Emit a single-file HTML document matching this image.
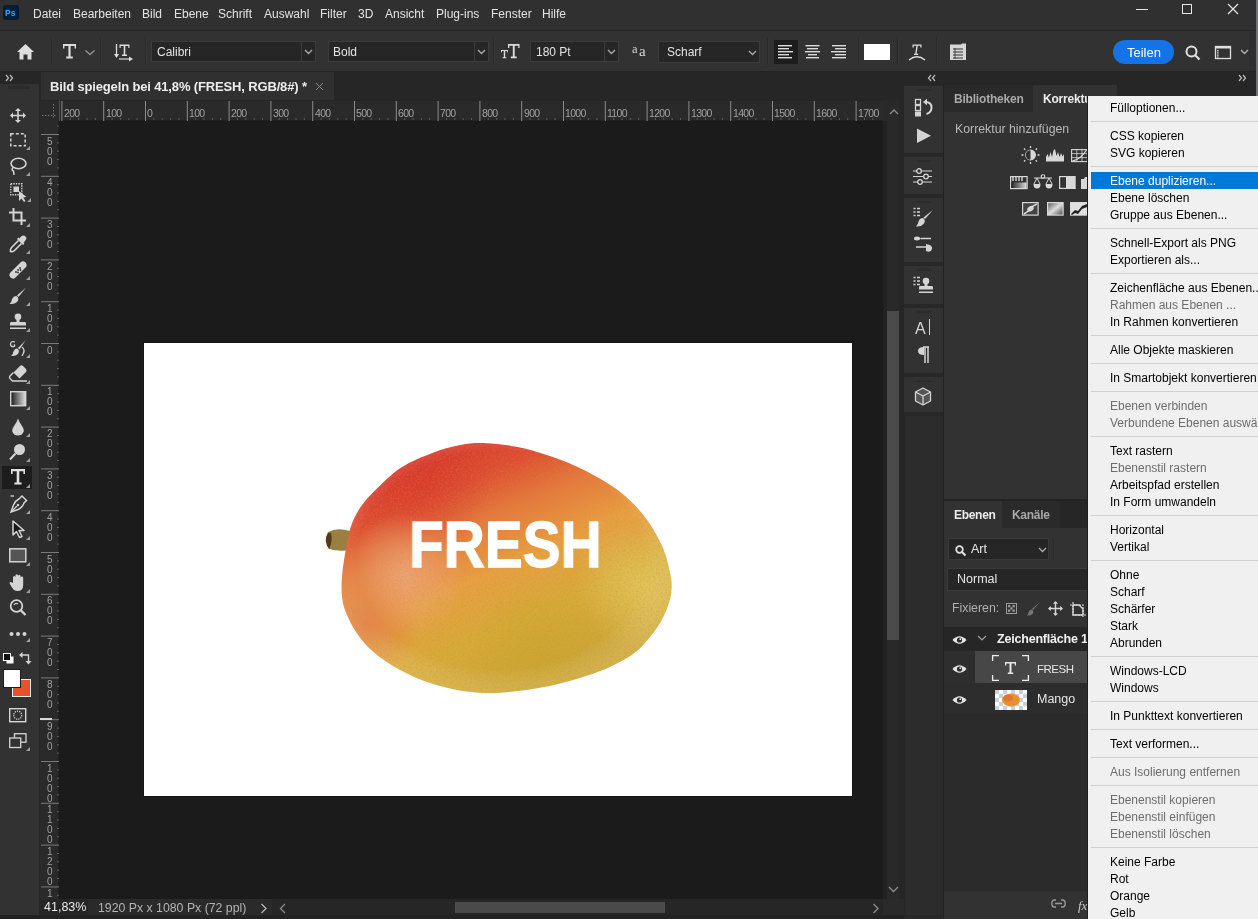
<!DOCTYPE html>
<html><head><meta charset="utf-8"><style>
*{margin:0;padding:0;box-sizing:border-box}
html,body{width:1258px;height:919px;overflow:hidden;background:#323232;font-family:"Liberation Sans",sans-serif;font-size:12px;color:#d6d6d6}
.a{position:absolute}
.t{position:absolute;white-space:nowrap;line-height:1;will-change:transform}
svg{position:absolute;overflow:visible}

</style></head><body>
<div class="a" style="left:0px;top:0px;width:1258px;height:30px;background:#303030;"></div>
<div class="a" style="left:0px;top:30px;width:1258px;height:1px;background:#262626;"></div>
<div class="a" style="left:3px;top:5px;width:16px;height:15px;background:#001e36;border-radius:3px"></div>
<div class="t" style="left:5.3px;top:8.60px;font-size:8.5px;color:#31a8ff;font-weight:bold;">Ps</div>
<div class="t" style="left:33px;top:7.84px;font-size:12px;color:#e2e2e2;font-weight:normal;">Datei</div>
<div class="t" style="left:73px;top:7.84px;font-size:12px;color:#e2e2e2;font-weight:normal;">Bearbeiten</div>
<div class="t" style="left:142px;top:7.84px;font-size:12px;color:#e2e2e2;font-weight:normal;">Bild</div>
<div class="t" style="left:174px;top:7.84px;font-size:12px;color:#e2e2e2;font-weight:normal;">Ebene</div>
<div class="t" style="left:218px;top:7.84px;font-size:12px;color:#e2e2e2;font-weight:normal;">Schrift</div>
<div class="t" style="left:264px;top:7.84px;font-size:12px;color:#e2e2e2;font-weight:normal;">Auswahl</div>
<div class="t" style="left:320px;top:7.84px;font-size:12px;color:#e2e2e2;font-weight:normal;">Filter</div>
<div class="t" style="left:358px;top:7.84px;font-size:12px;color:#e2e2e2;font-weight:normal;">3D</div>
<div class="t" style="left:385px;top:7.84px;font-size:12px;color:#e2e2e2;font-weight:normal;">Ansicht</div>
<div class="t" style="left:436px;top:7.84px;font-size:12px;color:#e2e2e2;font-weight:normal;">Plug-ins</div>
<div class="t" style="left:491px;top:7.84px;font-size:12px;color:#e2e2e2;font-weight:normal;">Fenster</div>
<div class="t" style="left:542px;top:7.84px;font-size:12px;color:#e2e2e2;font-weight:normal;">Hilfe</div>
<div class="a" style="left:1136px;top:9px;width:12px;height:1px;background:#e6e6e6;"></div>
<div class="a" style="left:1182px;top:4px;width:10px;height:10px;background:transparent;border:1px solid #e6e6e6"></div>
<svg style="left:1227px;top:3px" width="12" height="12" viewBox="0 0 12 12"><path d="M1,1 L11,11 M11,1 L1,11" stroke="#e6e6e6" stroke-width="1.2"/></svg>
<div class="a" style="left:0px;top:31px;width:1258px;height:40px;background:#323232;"></div>
<div class="a" style="left:0px;top:71px;width:1258px;height:1px;background:#232323;"></div>
<div class="a" style="left:51px;top:38px;width:1px;height:27px;background:#2a2a2a;"></div>
<div class="a" style="left:52px;top:38px;width:1px;height:27px;background:#363636;"></div>
<div class="a" style="left:100px;top:38px;width:1px;height:27px;background:#2a2a2a;"></div>
<div class="a" style="left:101px;top:38px;width:1px;height:27px;background:#363636;"></div>
<div class="a" style="left:145px;top:38px;width:1px;height:27px;background:#2a2a2a;"></div>
<div class="a" style="left:146px;top:38px;width:1px;height:27px;background:#363636;"></div>
<div class="a" style="left:493px;top:38px;width:1px;height:27px;background:#2a2a2a;"></div>
<div class="a" style="left:494px;top:38px;width:1px;height:27px;background:#363636;"></div>
<div class="a" style="left:767px;top:38px;width:1px;height:27px;background:#2a2a2a;"></div>
<div class="a" style="left:768px;top:38px;width:1px;height:27px;background:#363636;"></div>
<div class="a" style="left:858px;top:38px;width:1px;height:27px;background:#2a2a2a;"></div>
<div class="a" style="left:859px;top:38px;width:1px;height:27px;background:#363636;"></div>
<div class="a" style="left:897px;top:38px;width:1px;height:27px;background:#2a2a2a;"></div>
<div class="a" style="left:898px;top:38px;width:1px;height:27px;background:#363636;"></div>
<div class="a" style="left:936px;top:38px;width:1px;height:27px;background:#2a2a2a;"></div>
<div class="a" style="left:937px;top:38px;width:1px;height:27px;background:#363636;"></div>
<svg style="left:17px;top:44px" width="17" height="16" viewBox="0 0 17 16"><path d="M8.5,0 L17,8 L14.5,8 L14.5,15.5 L10.5,15.5 L10.5,10.5 L6.5,10.5 L6.5,15.5 L2.5,15.5 L2.5,8 L0,8 Z" fill="#dedede"/></svg>
<svg style="left:63px;top:44px" width="13" height="15" viewBox="0 0 13 15"><path d="M0,0 H13 V4.5 H11.6 V2 H7.6 V12.6 H9.8 V14.5 H3.2 V12.6 H5.4 V2 H1.4 V4.5 H0 Z" fill="#dcdcdc"/></svg>
<svg style="left:84px;top:49px" width="12" height="7" viewBox="0 0 12 7"><path d="M1.5,1.5 L6,5.5 L10.5,1.5" fill="none" stroke="#8f8f8f" stroke-width="1.5"/></svg>
<svg style="left:114px;top:43px" width="20" height="19" viewBox="0 0 20 19"><path d="M2.5,1 V13" stroke="#dcdcdc" stroke-width="1.3"/><path d="M0,11 L2.5,15 L5,11 Z" fill="#dcdcdc"/><path d="M5.5,1.5 H15.5 V5 H14.3 V3 H11.3 V11.4 H13 V13 H8 V11.4 H9.7 V3 H6.7 V5 H5.5 Z" fill="#dcdcdc"/><path d="M5,16 H16" stroke="#dcdcdc" stroke-width="1.2"/><path d="M15,13.5 L19,16 L15,18.5 Z" fill="#dcdcdc"/></svg>
<div class="a" style="left:151px;top:41px;width:165px;height:21px;background:#262626;border:1px solid #3c3c3c"></div>
<div class="a" style="left:301px;top:42px;width:1px;height:19px;background:#3c3c3c;"></div>
<svg style="left:304px;top:49px" width="9" height="6" viewBox="0 0 9 6"><path d="M1,1 L4.5,4.5 L8,1" fill="none" stroke="#a8a8a8" stroke-width="1.4"/></svg>
<div class="t" style="left:157px;top:45.64px;font-size:12px;color:#e2e2e2;font-weight:normal;">Calibri</div>
<div class="a" style="left:328px;top:41px;width:161px;height:21px;background:#262626;border:1px solid #3c3c3c"></div>
<div class="a" style="left:474px;top:42px;width:1px;height:19px;background:#3c3c3c;"></div>
<svg style="left:477px;top:49px" width="9" height="6" viewBox="0 0 9 6"><path d="M1,1 L4.5,4.5 L8,1" fill="none" stroke="#a8a8a8" stroke-width="1.4"/></svg>
<div class="t" style="left:333px;top:45.64px;font-size:12px;color:#e2e2e2;font-weight:normal;">Bold</div>
<svg style="left:501px;top:44px" width="19" height="15" viewBox="0 0 19 15"><path d="M0,6 H7 V8.5 H6.2 V7 H4.2 V13.2 H5.4 V14.2 H1.6 V13.2 H2.8 V7 H0.8 V8.5 H0 Z" fill="#dcdcdc"/><path d="M7,0 H18.5 V4 H17.2 V1.8 H13.7 V12.5 H15.7 V14.3 H9.8 V12.5 H11.8 V1.8 H8.3 V4 H7 Z" fill="#dcdcdc"/></svg>
<div class="a" style="left:530px;top:41px;width:89px;height:21px;background:#262626;border:1px solid #3c3c3c"></div>
<div class="a" style="left:604px;top:42px;width:1px;height:19px;background:#3c3c3c;"></div>
<svg style="left:607px;top:49px" width="9" height="6" viewBox="0 0 9 6"><path d="M1,1 L4.5,4.5 L8,1" fill="none" stroke="#a8a8a8" stroke-width="1.4"/></svg>
<div class="t" style="left:536px;top:45.64px;font-size:12px;color:#e2e2e2;font-weight:normal;">180 Pt</div>
<div class="t" style="left:632px;top:42.92px;font-size:12.5px;color:#d8d8d8;font-weight:normal;font-family:'Liberation Serif',serif">a</div>
<div class="t" style="left:638.5px;top:44.30px;font-size:15px;color:#d8d8d8;font-weight:normal;font-family:'Liberation Serif',serif">a</div>
<div class="a" style="left:658px;top:41px;width:102px;height:22px;background:#262626;border:1px solid #3c3c3c"></div>
<svg style="left:748px;top:49.5px" width="9" height="6" viewBox="0 0 9 6"><path d="M1,1 L4.5,4.5 L8,1" fill="none" stroke="#a8a8a8" stroke-width="1.4"/></svg>
<div class="t" style="left:667px;top:46.14px;font-size:12px;color:#e2e2e2;font-weight:normal;">Scharf</div>
<div class="a" style="left:774px;top:40px;width:24px;height:24px;background:#1d1d1d;"></div>
<svg style="left:778px;top:45px" width="15" height="14" viewBox="0 0 15 14"><rect x="0" y="0" width="14" height="1.4" fill="#dcdcdc"/><rect x="0" y="3" width="11" height="1.4" fill="#dcdcdc"/><rect x="0" y="6" width="15" height="1.4" fill="#dcdcdc"/><rect x="0" y="9" width="11" height="1.4" fill="#dcdcdc"/><rect x="0" y="12" width="14" height="1.4" fill="#dcdcdc"/></svg>
<svg style="left:804.5px;top:45px" width="15" height="14" viewBox="0 0 15 14"><rect x="0.5" y="0" width="14" height="1.4" fill="#dcdcdc"/><rect x="2" y="3" width="11" height="1.4" fill="#dcdcdc"/><rect x="0" y="6" width="15" height="1.4" fill="#dcdcdc"/><rect x="3" y="9" width="9" height="1.4" fill="#dcdcdc"/><rect x="1" y="12" width="13" height="1.4" fill="#dcdcdc"/></svg>
<svg style="left:831px;top:45px" width="15" height="14" viewBox="0 0 15 14"><rect x="1" y="0" width="14" height="1.4" fill="#dcdcdc"/><rect x="4" y="3" width="11" height="1.4" fill="#dcdcdc"/><rect x="0" y="6" width="15" height="1.4" fill="#dcdcdc"/><rect x="4" y="9" width="11" height="1.4" fill="#dcdcdc"/><rect x="1" y="12" width="14" height="1.4" fill="#dcdcdc"/></svg>
<div class="a" style="left:864px;top:44px;width:26px;height:16px;background:#ffffff;"></div>
<svg style="left:908px;top:43px" width="18" height="18" viewBox="0 0 18 18"><path d="M4.5,1.5 H13.5 V4.5 H12.3 V2.8 H9.8 L8.6,10.8 H10.2 V12 H6 V10.8 H7.2 L8.4,2.8 H5.7 V4.5 H4.5 Z" fill="#dcdcdc"/><path d="M1,17 Q9,10.5 17,17" fill="none" stroke="#dcdcdc" stroke-width="1.4"/></svg>
<svg style="left:949px;top:43px" width="18" height="18" viewBox="0 0 18 18"><path d="M1,1.5 H12 L13,0.5 H17 V17 H1 Z" fill="#d6d6d6"/><path d="M4,6 H14 M4,9 H14 M4,12 H14 M4,15 H14" stroke="#323232" stroke-width="1.2"/><path d="M6,5 V16" stroke="#323232" stroke-width="0.8"/></svg>
<div class="a" style="left:1113px;top:40px;width:61px;height:24px;background:#1473e6;border-radius:12px"></div>
<div class="t" style="left:1126.5px;top:45.80px;font-size:13px;color:#ffffff;font-weight:normal;">Teilen</div>
<svg style="left:1185px;top:45px" width="16" height="16" viewBox="0 0 16 16"><circle cx="6.5" cy="6.5" r="5" fill="none" stroke="#e0e0e0" stroke-width="2"/><path d="M10,10 L14.5,14.5" stroke="#e0e0e0" stroke-width="2.2"/></svg>
<svg style="left:1214px;top:45px" width="18" height="15" viewBox="0 0 18 15"><rect x="1.5" y="1.5" width="15" height="12" fill="none" stroke="#e0e0e0" stroke-width="1.3"/><rect x="1.5" y="1.5" width="15" height="2" fill="#e0e0e0"/><path d="M3.8,5 V12.5" stroke="#e0e0e0" stroke-width="1.6" stroke-dasharray="1.3,0.9"/></svg>
<svg style="left:1240px;top:49px" width="10" height="6" viewBox="0 0 10 6"><path d="M1,1 L4.5,4.5 L8,1" fill="none" stroke="#b0b0b0" stroke-width="1.4"/></svg>
<div class="a" style="left:1253px;top:31px;width:1px;height:40px;background:#2a2a2a;"></div>
<div class="a" style="left:0px;top:72px;width:39px;height:847px;background:#323232;"></div>
<div class="a" style="left:0px;top:72px;width:39px;height:12px;background:#262626;"></div>
<div class="a" style="left:39px;top:72px;width:1px;height:847px;background:#262626;"></div>
<svg style="left:5px;top:74px" width="10" height="8" viewBox="0 0 10 8"><path d="M1,1 L3.5,4 L1,7 M5,1 L7.5,4 L5,7" fill="none" stroke="#bdbdbd" stroke-width="1.2"/></svg>
<div class="a" style="left:8px;top:86px;width:22px;height:3px;background:#2b2b2b;"></div>
<svg style="left:10px;top:108px" width="16" height="15" viewBox="0 0 16 15"><path d="M8,1 V14 M1,7.5 H15" stroke="#d4d4d4" stroke-width="1.6"/><path d="M8,0 L11,3 H5 Z M8,15 L11,12 H5 Z M0,7.5 L3,4.5 V10.5 Z M16,7.5 L13,4.5 V10.5 Z" fill="#d4d4d4"/></svg>
<svg style="left:10px;top:133px" width="17" height="14" viewBox="0 0 17 14"><rect x="0.8" y="0.8" width="14.4" height="12" fill="none" stroke="#d4d4d4" stroke-width="1.5" stroke-dasharray="3,2"/></svg>
<svg style="left:26px;top:146px" width="5" height="5" viewBox="0 0 5 5"><path d="M4,0 L4,4 L0,4 Z" fill="#a0a0a0"/></svg>
<svg style="left:9px;top:157px" width="18" height="19" viewBox="0 0 18 19"><ellipse cx="9.5" cy="6.5" rx="7.5" ry="5.2" fill="none" stroke="#d4d4d4" stroke-width="1.6"/><path d="M4,10.5 Q2,13 4.5,14 L5,18" fill="none" stroke="#d4d4d4" stroke-width="1.5"/></svg>
<svg style="left:26px;top:172px" width="5" height="5" viewBox="0 0 5 5"><path d="M4,0 L4,4 L0,4 Z" fill="#a0a0a0"/></svg>
<svg style="left:10px;top:183px" width="19" height="19" viewBox="0 0 19 19"><rect x="0.8" y="0.8" width="11" height="11" fill="none" stroke="#d4d4d4" stroke-width="1.4" stroke-dasharray="1.4,1.1"/><rect x="3.5" y="3.5" width="5.5" height="5.5" fill="#d4d4d4"/><path d="M9,8 L9,18 L11.5,15.5 L14,19 L15.5,18 L13.2,14.5 L16.5,14 Z" fill="#d4d4d4"/></svg>
<svg style="left:27px;top:198px" width="5" height="5" viewBox="0 0 5 5"><path d="M4,0 L4,4 L0,4 Z" fill="#a0a0a0"/></svg>
<svg style="left:9px;top:208px" width="18" height="18" viewBox="0 0 18 18"><path d="M4.5,0 V12.5 H17 M0,4.5 H12.5 V17" fill="none" stroke="#d4d4d4" stroke-width="2"/></svg>
<svg style="left:26px;top:223px" width="5" height="5" viewBox="0 0 5 5"><path d="M4,0 L4,4 L0,4 Z" fill="#a0a0a0"/></svg>
<svg style="left:9px;top:235px" width="18" height="18" viewBox="0 0 18 18"><path d="M12,1.5 Q14.5,-0.5 16.5,1.5 Q18.5,3.5 16,6 L14.5,7.5 L15.5,8.5 L14,10 L8,4 L9.5,2.5 L10.5,3.5 Z" fill="#d4d4d4"/><path d="M9.5,5.5 L2.5,12.5 Q1,14 1.5,16.5 Q4,17 5.5,15.5 L12.5,8.5" fill="none" stroke="#d4d4d4" stroke-width="1.6"/></svg>
<svg style="left:26px;top:250px" width="5" height="5" viewBox="0 0 5 5"><path d="M4,0 L4,4 L0,4 Z" fill="#a0a0a0"/></svg>
<svg style="left:9px;top:261px" width="18" height="18" viewBox="0 0 18 18"><path d="M12,1 Q14,-0.5 16.5,1.5 Q18.5,4 17,6 L6,17 Q4,18.5 1.5,16.5 Q-0.5,14 1,12 Z" fill="#d4d4d4"/><circle cx="7" cy="11" r="0.9" fill="#323232"/><circle cx="9" cy="9" r="0.9" fill="#323232"/><circle cx="11" cy="7" r="0.9" fill="#323232"/><circle cx="9" cy="11.5" r="0.9" fill="#323232"/><circle cx="11.5" cy="9" r="0.9" fill="#323232"/></svg>
<svg style="left:26px;top:276px" width="5" height="5" viewBox="0 0 5 5"><path d="M4,0 L4,4 L0,4 Z" fill="#a0a0a0"/></svg>
<svg style="left:9px;top:287px" width="18" height="18" viewBox="0 0 18 18"><path d="M17,0.5 L9.5,10 L8,8.5 Z" fill="#d4d4d4"/><path d="M7.5,9 Q4,9 3,12.5 Q2.5,15.5 0.5,17 Q5.5,17.5 8,15 Q10,12.5 9,10.5 Z" fill="#d4d4d4"/></svg>
<svg style="left:26px;top:302px" width="5" height="5" viewBox="0 0 5 5"><path d="M4,0 L4,4 L0,4 Z" fill="#a0a0a0"/></svg>
<svg style="left:9px;top:313px" width="18" height="18" viewBox="0 0 18 18"><circle cx="9" cy="3.8" r="3.3" fill="#d4d4d4"/><path d="M7.5,6 H10.5 V9 H16 Q17,9 17,10.5 V12.5 H1 V10.5 Q1,9 2,9 H7.5 Z" fill="#d4d4d4"/><rect x="1" y="14.5" width="16" height="1.5" fill="#d4d4d4"/></svg>
<svg style="left:26px;top:328px" width="5" height="5" viewBox="0 0 5 5"><path d="M4,0 L4,4 L0,4 Z" fill="#a0a0a0"/></svg>
<svg style="left:9px;top:339px" width="19" height="19" viewBox="0 0 19 19"><path d="M6,3 Q2,1.5 1.5,5 Q1.5,8 5,7.5 Q6.5,6.5 5,5.5" fill="none" stroke="#d4d4d4" stroke-width="1.3"/><path d="M16.5,1.5 L10.5,10.5 L9,9 Z" fill="#d4d4d4"/><path d="M8.5,9.5 Q5.5,9.5 4.5,12.5 Q4,15.5 2,17 Q6.5,17.5 9,15 Q10.5,13 9.7,11 Z" fill="#d4d4d4"/><path d="M13,8 Q17,11 13,17" fill="none" stroke="#d4d4d4" stroke-width="1.3"/></svg>
<svg style="left:26px;top:354px" width="5" height="5" viewBox="0 0 5 5"><path d="M4,0 L4,4 L0,4 Z" fill="#a0a0a0"/></svg>
<svg style="left:9px;top:365px" width="19" height="18" viewBox="0 0 19 18"><path d="M11,1 Q12.5,-0.3 14,1 L17,4 Q18.3,5.5 17,7 L10.5,13.5 L4.5,7.5 Z" fill="#d4d4d4"/><path d="M4.5,7.5 L1,11 Q0,12.3 1,13.5 L3.5,16 H18" fill="none" stroke="#d4d4d4" stroke-width="1.4"/></svg>
<svg style="left:26px;top:380px" width="5" height="5" viewBox="0 0 5 5"><path d="M4,0 L4,4 L0,4 Z" fill="#a0a0a0"/></svg>
<svg style="left:10px;top:391px" width="18" height="16" viewBox="0 0 18 16"><defs><linearGradient id="gg" x1="0" y1="0" x2="1" y2="0"><stop offset="0" stop-color="#1a1a1a"/><stop offset="1" stop-color="#e0e0e0"/></linearGradient></defs><rect x="0.7" y="0.7" width="15" height="14" fill="url(#gg)" stroke="#d4d4d4" stroke-width="1.4"/></svg>
<svg style="left:26px;top:406px" width="5" height="5" viewBox="0 0 5 5"><path d="M4,0 L4,4 L0,4 Z" fill="#a0a0a0"/></svg>
<svg style="left:11px;top:418px" width="14" height="18" viewBox="0 0 14 18"><path d="M7,0.5 Q8,4 11,8 Q13.5,11.5 12.5,14 Q11,17.5 7,17.5 Q3,17.5 1.5,14 Q0.5,11.5 3,8 Q6,4 7,0.5 Z" fill="#d4d4d4"/></svg>
<svg style="left:26px;top:433px" width="5" height="5" viewBox="0 0 5 5"><path d="M4,0 L4,4 L0,4 Z" fill="#a0a0a0"/></svg>
<svg style="left:9px;top:443px" width="18" height="18" viewBox="0 0 18 18"><circle cx="10.5" cy="6.5" r="5.5" fill="#d4d4d4"/><path d="M6.5,10.5 L1,16.5" stroke="#d4d4d4" stroke-width="2"/></svg>
<svg style="left:26px;top:458px" width="5" height="5" viewBox="0 0 5 5"><path d="M4,0 L4,4 L0,4 Z" fill="#a0a0a0"/></svg>
<div class="a" style="left:2px;top:466px;width:30px;height:23px;background:#1d1d1d;"></div>
<svg style="left:11px;top:469px" width="14" height="16" viewBox="0 0 14 16"><path d="M0,0 H14 V5 H12.4 V2.2 H8.3 V13.6 H10.6 V15.5 H3.4 V13.6 H5.7 V2.2 H1.6 V5 H0 Z" fill="#e0e0e0"/></svg>
<svg style="left:26px;top:484px" width="5" height="5" viewBox="0 0 5 5"><path d="M4,0 L4,4 L0,4 Z" fill="#a0a0a0"/></svg>
<svg style="left:9px;top:495px" width="19" height="18" viewBox="0 0 19 18"><path d="M1.5,1 H5" stroke="#d4d4d4" stroke-width="1.3"/><path d="M13,1 L17.5,5.5 L15,8 Q13.5,12.5 9,14.5 L2,17 L4.5,10 Q6.5,5.5 10.5,3.5 Z" fill="none" stroke="#d4d4d4" stroke-width="1.5"/><path d="M2.5,16.5 L8,11" stroke="#d4d4d4" stroke-width="1.2"/><circle cx="9" cy="10" r="1.2" fill="#d4d4d4"/></svg>
<svg style="left:26px;top:510px" width="5" height="5" viewBox="0 0 5 5"><path d="M4,0 L4,4 L0,4 Z" fill="#a0a0a0"/></svg>
<svg style="left:12px;top:520px" width="14" height="19" viewBox="0 0 14 19"><path d="M1,1 L1,15 L4.5,11.5 L7.5,17.5 L10,16.5 L7,10.5 L12,10.5 Z" fill="#1a1a1a" stroke="#d4d4d4" stroke-width="1.5" stroke-linejoin="round"/></svg>
<svg style="left:26px;top:536px" width="5" height="5" viewBox="0 0 5 5"><path d="M4,0 L4,4 L0,4 Z" fill="#a0a0a0"/></svg>
<svg style="left:9px;top:548px" width="18" height="15" viewBox="0 0 18 15"><rect x="0.8" y="0.8" width="16" height="13" fill="#555" stroke="#d4d4d4" stroke-width="1.5"/></svg>
<svg style="left:26px;top:562px" width="5" height="5" viewBox="0 0 5 5"><path d="M4,0 L4,4 L0,4 Z" fill="#a0a0a0"/></svg>
<svg style="left:9px;top:574px" width="18" height="18" viewBox="0 0 18 18"><path d="M4,9 V3.5 Q4,2 5.2,2 Q6.4,2 6.4,3.5 V8 V1.8 Q6.4,0.3 7.7,0.3 Q9,0.3 9,1.8 V8 V2.3 Q9,0.8 10.3,0.8 Q11.6,0.8 11.6,2.3 V8.5 V4 Q11.6,2.6 12.9,2.6 Q14.2,2.6 14.2,4 V11 Q14.2,17 8.5,17 Q5,17 3,13.5 L0.8,9.8 Q0.2,8.5 1.3,8 Q2.4,7.6 3.2,8.6 Z" fill="#d4d4d4"/></svg>
<svg style="left:26px;top:589px" width="5" height="5" viewBox="0 0 5 5"><path d="M4,0 L4,4 L0,4 Z" fill="#a0a0a0"/></svg>
<svg style="left:9px;top:599px" width="18" height="18" viewBox="0 0 18 18"><circle cx="7.5" cy="7" r="5.8" fill="none" stroke="#d4d4d4" stroke-width="1.8"/><path d="M11.5,11 L16.5,16" stroke="#d4d4d4" stroke-width="2.4"/><path d="M5,6 Q6.5,3.5 9,5" fill="none" stroke="#d4d4d4" stroke-width="1.3"/></svg>
<svg style="left:9px;top:630px" width="18" height="8" viewBox="0 0 18 8"><circle cx="2.5" cy="4" r="2" fill="#d4d4d4"/><circle cx="9" cy="4" r="2" fill="#d4d4d4"/><circle cx="15.5" cy="4" r="2" fill="#d4d4d4"/></svg>
<svg style="left:26px;top:638px" width="5" height="5" viewBox="0 0 5 5"><path d="M4,0 L4,4 L0,4 Z" fill="#a0a0a0"/></svg>
<svg style="left:3px;top:653px" width="11" height="11" viewBox="0 0 11 11"><rect x="3.5" y="3.5" width="7" height="7" fill="#fff"/><rect x="0.5" y="0.5" width="7" height="7" fill="#111" stroke="#fff" stroke-width="1"/></svg>
<svg style="left:19px;top:652px" width="13" height="13" viewBox="0 0 13 13"><path d="M3,3 H9.5 V9.5" fill="none" stroke="#d4d4d4" stroke-width="1.4"/><path d="M0,3 L3.5,0 V6 Z M9.5,12.5 L6.5,9 H12.5 Z" fill="#d4d4d4"/></svg>
<div class="a" style="left:12px;top:679px;width:19px;height:18px;background:#e8522b;border:1px solid #f0f0f0"></div>
<div class="a" style="left:3px;top:669px;width:18px;height:19px;background:#ffffff;border:1px solid #1f1f1f"></div>
<svg style="left:9px;top:708px" width="18" height="15" viewBox="0 0 18 15"><rect x="0.7" y="0.7" width="16" height="13" fill="none" stroke="#d4d4d4" stroke-width="1.4"/><circle cx="8.7" cy="7.2" r="4" fill="none" stroke="#d4d4d4" stroke-width="1.3" stroke-dasharray="1.2,1"/></svg>
<svg style="left:9px;top:733px" width="18" height="16" viewBox="0 0 18 16"><rect x="5.5" y="0.7" width="11.5" height="8.5" fill="none" stroke="#d4d4d4" stroke-width="1.3"/><rect x="0.7" y="5" width="11" height="9.5" fill="#323232" stroke="#d4d4d4" stroke-width="1.3"/></svg>
<svg style="left:26px;top:747px" width="5" height="5" viewBox="0 0 5 5"><path d="M4,0 L4,4 L0,4 Z" fill="#a0a0a0"/></svg>
<div class="a" style="left:40px;top:72px;width:864px;height:28px;background:#262626;"></div>
<div class="a" style="left:41px;top:72px;width:293px;height:28px;background:#303030;"></div>
<div class="t" style="left:50px;top:79.50px;font-size:13px;color:#ececec;font-weight:bold;letter-spacing:-0.15px">Bild spiegeln bei 41,8% (FRESH, RGB/8#) *</div>
<svg style="left:315px;top:82px" width="9" height="9" viewBox="0 0 9 9"><path d="M1,1 L8,8 M8,1 L1,8" stroke="#8a8a8a" stroke-width="1"/></svg>
<div class="a" style="left:40px;top:101px;width:843px;height:20px;background:#2a2a2a;"></div>
<div class="a" style="left:40px;top:100px;width:864px;height:1px;background:#262626;"></div>
<div class="a" style="left:40px;top:121px;width:19px;height:778px;background:#2a2a2a;"></div>
<div class="a" style="left:59px;top:120px;width:824px;height:1px;background:#202020;"></div>
<div class="a" style="left:58px;top:121px;width:1px;height:778px;background:#202020;"></div>
<svg style="left:42px;top:104px" width="16" height="16" viewBox="0 0 16 16"><path d="M0,11.5 H15 M11.5,0 V15" stroke="#707070" stroke-width="1" stroke-dasharray="1.5,1.5"/></svg>
<div class="a" style="left:59px;top:100px;width:1px;height:21px;background:#4a4a4a;"></div>
<svg style="left:60px;top:100px" width="823" height="21" viewBox="0 0 823 21"><rect x="9.8" y="18" width="1" height="2" fill="#5c5c5c"/><rect x="18.1" y="18" width="1" height="2" fill="#5c5c5c"/><rect x="26.5" y="18" width="1" height="2" fill="#5c5c5c"/><rect x="34.8" y="18" width="1" height="2" fill="#5c5c5c"/><rect x="1.4" y="1" width="1" height="20" fill="#8a8a8a"/><rect x="51.6" y="18" width="1" height="2" fill="#5c5c5c"/><rect x="59.9" y="18" width="1" height="2" fill="#5c5c5c"/><rect x="68.3" y="18" width="1" height="2" fill="#5c5c5c"/><rect x="76.6" y="18" width="1" height="2" fill="#5c5c5c"/><rect x="43.2" y="1" width="1" height="20" fill="#8a8a8a"/><rect x="93.4" y="18" width="1" height="2" fill="#5c5c5c"/><rect x="101.7" y="18" width="1" height="2" fill="#5c5c5c"/><rect x="110.1" y="18" width="1" height="2" fill="#5c5c5c"/><rect x="118.4" y="18" width="1" height="2" fill="#5c5c5c"/><rect x="85.0" y="1" width="1" height="20" fill="#8a8a8a"/><rect x="135.2" y="18" width="1" height="2" fill="#5c5c5c"/><rect x="143.5" y="18" width="1" height="2" fill="#5c5c5c"/><rect x="151.9" y="18" width="1" height="2" fill="#5c5c5c"/><rect x="160.2" y="18" width="1" height="2" fill="#5c5c5c"/><rect x="126.8" y="1" width="1" height="20" fill="#8a8a8a"/><rect x="177.0" y="18" width="1" height="2" fill="#5c5c5c"/><rect x="185.3" y="18" width="1" height="2" fill="#5c5c5c"/><rect x="193.7" y="18" width="1" height="2" fill="#5c5c5c"/><rect x="202.0" y="18" width="1" height="2" fill="#5c5c5c"/><rect x="168.6" y="1" width="1" height="20" fill="#8a8a8a"/><rect x="218.8" y="18" width="1" height="2" fill="#5c5c5c"/><rect x="227.1" y="18" width="1" height="2" fill="#5c5c5c"/><rect x="235.5" y="18" width="1" height="2" fill="#5c5c5c"/><rect x="243.8" y="18" width="1" height="2" fill="#5c5c5c"/><rect x="210.4" y="1" width="1" height="20" fill="#8a8a8a"/><rect x="260.6" y="18" width="1" height="2" fill="#5c5c5c"/><rect x="268.9" y="18" width="1" height="2" fill="#5c5c5c"/><rect x="277.3" y="18" width="1" height="2" fill="#5c5c5c"/><rect x="285.6" y="18" width="1" height="2" fill="#5c5c5c"/><rect x="252.2" y="1" width="1" height="20" fill="#8a8a8a"/><rect x="302.4" y="18" width="1" height="2" fill="#5c5c5c"/><rect x="310.7" y="18" width="1" height="2" fill="#5c5c5c"/><rect x="319.1" y="18" width="1" height="2" fill="#5c5c5c"/><rect x="327.4" y="18" width="1" height="2" fill="#5c5c5c"/><rect x="294.0" y="1" width="1" height="20" fill="#8a8a8a"/><rect x="344.2" y="18" width="1" height="2" fill="#5c5c5c"/><rect x="352.5" y="18" width="1" height="2" fill="#5c5c5c"/><rect x="360.9" y="18" width="1" height="2" fill="#5c5c5c"/><rect x="369.2" y="18" width="1" height="2" fill="#5c5c5c"/><rect x="335.8" y="1" width="1" height="20" fill="#8a8a8a"/><rect x="386.0" y="18" width="1" height="2" fill="#5c5c5c"/><rect x="394.3" y="18" width="1" height="2" fill="#5c5c5c"/><rect x="402.7" y="18" width="1" height="2" fill="#5c5c5c"/><rect x="411.0" y="18" width="1" height="2" fill="#5c5c5c"/><rect x="377.6" y="1" width="1" height="20" fill="#8a8a8a"/><rect x="427.8" y="18" width="1" height="2" fill="#5c5c5c"/><rect x="436.1" y="18" width="1" height="2" fill="#5c5c5c"/><rect x="444.5" y="18" width="1" height="2" fill="#5c5c5c"/><rect x="452.8" y="18" width="1" height="2" fill="#5c5c5c"/><rect x="419.4" y="1" width="1" height="20" fill="#8a8a8a"/><rect x="469.6" y="18" width="1" height="2" fill="#5c5c5c"/><rect x="477.9" y="18" width="1" height="2" fill="#5c5c5c"/><rect x="486.3" y="18" width="1" height="2" fill="#5c5c5c"/><rect x="494.6" y="18" width="1" height="2" fill="#5c5c5c"/><rect x="461.2" y="1" width="1" height="20" fill="#8a8a8a"/><rect x="511.4" y="18" width="1" height="2" fill="#5c5c5c"/><rect x="519.7" y="18" width="1" height="2" fill="#5c5c5c"/><rect x="528.1" y="18" width="1" height="2" fill="#5c5c5c"/><rect x="536.4" y="18" width="1" height="2" fill="#5c5c5c"/><rect x="503.0" y="1" width="1" height="20" fill="#8a8a8a"/><rect x="553.2" y="18" width="1" height="2" fill="#5c5c5c"/><rect x="561.5" y="18" width="1" height="2" fill="#5c5c5c"/><rect x="569.9" y="18" width="1" height="2" fill="#5c5c5c"/><rect x="578.2" y="18" width="1" height="2" fill="#5c5c5c"/><rect x="544.8" y="1" width="1" height="20" fill="#8a8a8a"/><rect x="595.0" y="18" width="1" height="2" fill="#5c5c5c"/><rect x="603.3" y="18" width="1" height="2" fill="#5c5c5c"/><rect x="611.7" y="18" width="1" height="2" fill="#5c5c5c"/><rect x="620.0" y="18" width="1" height="2" fill="#5c5c5c"/><rect x="586.6" y="1" width="1" height="20" fill="#8a8a8a"/><rect x="636.8" y="18" width="1" height="2" fill="#5c5c5c"/><rect x="645.1" y="18" width="1" height="2" fill="#5c5c5c"/><rect x="653.5" y="18" width="1" height="2" fill="#5c5c5c"/><rect x="661.8" y="18" width="1" height="2" fill="#5c5c5c"/><rect x="628.4" y="1" width="1" height="20" fill="#8a8a8a"/><rect x="678.6" y="18" width="1" height="2" fill="#5c5c5c"/><rect x="686.9" y="18" width="1" height="2" fill="#5c5c5c"/><rect x="695.3" y="18" width="1" height="2" fill="#5c5c5c"/><rect x="703.6" y="18" width="1" height="2" fill="#5c5c5c"/><rect x="670.2" y="1" width="1" height="20" fill="#8a8a8a"/><rect x="720.4" y="18" width="1" height="2" fill="#5c5c5c"/><rect x="728.7" y="18" width="1" height="2" fill="#5c5c5c"/><rect x="737.1" y="18" width="1" height="2" fill="#5c5c5c"/><rect x="745.4" y="18" width="1" height="2" fill="#5c5c5c"/><rect x="712.0" y="1" width="1" height="20" fill="#8a8a8a"/><rect x="762.2" y="18" width="1" height="2" fill="#5c5c5c"/><rect x="770.5" y="18" width="1" height="2" fill="#5c5c5c"/><rect x="778.9" y="18" width="1" height="2" fill="#5c5c5c"/><rect x="787.2" y="18" width="1" height="2" fill="#5c5c5c"/><rect x="753.8" y="1" width="1" height="20" fill="#8a8a8a"/><rect x="804.0" y="18" width="1" height="2" fill="#5c5c5c"/><rect x="812.3" y="18" width="1" height="2" fill="#5c5c5c"/><rect x="795.6" y="1" width="1" height="20" fill="#8a8a8a"/></svg>
<div class="t" style="left:63.7px;top:107.91px;font-size:10.5px;color:#a0a0a0;font-weight:normal;letter-spacing:-0.7px">200</div>
<div class="t" style="left:105.5px;top:107.91px;font-size:10.5px;color:#a0a0a0;font-weight:normal;letter-spacing:-0.7px">100</div>
<div class="t" style="left:147.3px;top:107.91px;font-size:10.5px;color:#a0a0a0;font-weight:normal;letter-spacing:-0.7px">0</div>
<div class="t" style="left:189.1px;top:107.91px;font-size:10.5px;color:#a0a0a0;font-weight:normal;letter-spacing:-0.7px">100</div>
<div class="t" style="left:230.9px;top:107.91px;font-size:10.5px;color:#a0a0a0;font-weight:normal;letter-spacing:-0.7px">200</div>
<div class="t" style="left:272.7px;top:107.91px;font-size:10.5px;color:#a0a0a0;font-weight:normal;letter-spacing:-0.7px">300</div>
<div class="t" style="left:314.5px;top:107.91px;font-size:10.5px;color:#a0a0a0;font-weight:normal;letter-spacing:-0.7px">400</div>
<div class="t" style="left:356.3px;top:107.91px;font-size:10.5px;color:#a0a0a0;font-weight:normal;letter-spacing:-0.7px">500</div>
<div class="t" style="left:398.1px;top:107.91px;font-size:10.5px;color:#a0a0a0;font-weight:normal;letter-spacing:-0.7px">600</div>
<div class="t" style="left:439.9px;top:107.91px;font-size:10.5px;color:#a0a0a0;font-weight:normal;letter-spacing:-0.7px">700</div>
<div class="t" style="left:481.7px;top:107.91px;font-size:10.5px;color:#a0a0a0;font-weight:normal;letter-spacing:-0.7px">800</div>
<div class="t" style="left:523.5px;top:107.91px;font-size:10.5px;color:#a0a0a0;font-weight:normal;letter-spacing:-0.7px">900</div>
<div class="t" style="left:565.3px;top:107.91px;font-size:10.5px;color:#a0a0a0;font-weight:normal;letter-spacing:-0.7px">1000</div>
<div class="t" style="left:607.1px;top:107.91px;font-size:10.5px;color:#a0a0a0;font-weight:normal;letter-spacing:-0.7px">1100</div>
<div class="t" style="left:648.9px;top:107.91px;font-size:10.5px;color:#a0a0a0;font-weight:normal;letter-spacing:-0.7px">1200</div>
<div class="t" style="left:690.7px;top:107.91px;font-size:10.5px;color:#a0a0a0;font-weight:normal;letter-spacing:-0.7px">1300</div>
<div class="t" style="left:732.5px;top:107.91px;font-size:10.5px;color:#a0a0a0;font-weight:normal;letter-spacing:-0.7px">1400</div>
<div class="t" style="left:774.3px;top:107.91px;font-size:10.5px;color:#a0a0a0;font-weight:normal;letter-spacing:-0.7px">1500</div>
<div class="t" style="left:816.1px;top:107.91px;font-size:10.5px;color:#a0a0a0;font-weight:normal;letter-spacing:-0.7px">1600</div>
<div class="t" style="left:857.9px;top:107.91px;font-size:10.5px;color:#a0a0a0;font-weight:normal;letter-spacing:-0.7px">1700</div>
<svg style="left:40px;top:121px" width="19" height="778" viewBox="0 0 19 778"><rect x="17" y="4.6" width="2" height="1" fill="#5c5c5c"/><rect x="17" y="21.4" width="2" height="1" fill="#5c5c5c"/><rect x="17" y="29.7" width="2" height="1" fill="#5c5c5c"/><rect x="17" y="38.1" width="2" height="1" fill="#5c5c5c"/><rect x="17" y="46.4" width="2" height="1" fill="#5c5c5c"/><rect x="1" y="13.0" width="18" height="1" fill="#7a7a7a"/><rect x="17" y="63.2" width="2" height="1" fill="#5c5c5c"/><rect x="17" y="71.5" width="2" height="1" fill="#5c5c5c"/><rect x="17" y="79.9" width="2" height="1" fill="#5c5c5c"/><rect x="17" y="88.2" width="2" height="1" fill="#5c5c5c"/><rect x="1" y="54.8" width="18" height="1" fill="#7a7a7a"/><rect x="17" y="105.0" width="2" height="1" fill="#5c5c5c"/><rect x="17" y="113.3" width="2" height="1" fill="#5c5c5c"/><rect x="17" y="121.7" width="2" height="1" fill="#5c5c5c"/><rect x="17" y="130.0" width="2" height="1" fill="#5c5c5c"/><rect x="1" y="96.6" width="18" height="1" fill="#7a7a7a"/><rect x="17" y="146.8" width="2" height="1" fill="#5c5c5c"/><rect x="17" y="155.1" width="2" height="1" fill="#5c5c5c"/><rect x="17" y="163.5" width="2" height="1" fill="#5c5c5c"/><rect x="17" y="171.8" width="2" height="1" fill="#5c5c5c"/><rect x="1" y="138.4" width="18" height="1" fill="#7a7a7a"/><rect x="17" y="188.6" width="2" height="1" fill="#5c5c5c"/><rect x="17" y="196.9" width="2" height="1" fill="#5c5c5c"/><rect x="17" y="205.3" width="2" height="1" fill="#5c5c5c"/><rect x="17" y="213.6" width="2" height="1" fill="#5c5c5c"/><rect x="1" y="180.2" width="18" height="1" fill="#7a7a7a"/><rect x="17" y="230.4" width="2" height="1" fill="#5c5c5c"/><rect x="17" y="238.7" width="2" height="1" fill="#5c5c5c"/><rect x="17" y="247.1" width="2" height="1" fill="#5c5c5c"/><rect x="17" y="255.4" width="2" height="1" fill="#5c5c5c"/><rect x="1" y="222.0" width="18" height="1" fill="#7a7a7a"/><rect x="17" y="272.2" width="2" height="1" fill="#5c5c5c"/><rect x="17" y="280.5" width="2" height="1" fill="#5c5c5c"/><rect x="17" y="288.9" width="2" height="1" fill="#5c5c5c"/><rect x="17" y="297.2" width="2" height="1" fill="#5c5c5c"/><rect x="1" y="263.8" width="18" height="1" fill="#7a7a7a"/><rect x="17" y="314.0" width="2" height="1" fill="#5c5c5c"/><rect x="17" y="322.3" width="2" height="1" fill="#5c5c5c"/><rect x="17" y="330.7" width="2" height="1" fill="#5c5c5c"/><rect x="17" y="339.0" width="2" height="1" fill="#5c5c5c"/><rect x="1" y="305.6" width="18" height="1" fill="#7a7a7a"/><rect x="17" y="355.8" width="2" height="1" fill="#5c5c5c"/><rect x="17" y="364.1" width="2" height="1" fill="#5c5c5c"/><rect x="17" y="372.5" width="2" height="1" fill="#5c5c5c"/><rect x="17" y="380.8" width="2" height="1" fill="#5c5c5c"/><rect x="1" y="347.4" width="18" height="1" fill="#7a7a7a"/><rect x="17" y="397.6" width="2" height="1" fill="#5c5c5c"/><rect x="17" y="405.9" width="2" height="1" fill="#5c5c5c"/><rect x="17" y="414.3" width="2" height="1" fill="#5c5c5c"/><rect x="17" y="422.6" width="2" height="1" fill="#5c5c5c"/><rect x="1" y="389.2" width="18" height="1" fill="#7a7a7a"/><rect x="17" y="439.4" width="2" height="1" fill="#5c5c5c"/><rect x="17" y="447.7" width="2" height="1" fill="#5c5c5c"/><rect x="17" y="456.1" width="2" height="1" fill="#5c5c5c"/><rect x="17" y="464.4" width="2" height="1" fill="#5c5c5c"/><rect x="1" y="431.0" width="18" height="1" fill="#7a7a7a"/><rect x="17" y="481.2" width="2" height="1" fill="#5c5c5c"/><rect x="17" y="489.5" width="2" height="1" fill="#5c5c5c"/><rect x="17" y="497.9" width="2" height="1" fill="#5c5c5c"/><rect x="17" y="506.2" width="2" height="1" fill="#5c5c5c"/><rect x="1" y="472.8" width="18" height="1" fill="#7a7a7a"/><rect x="17" y="523.0" width="2" height="1" fill="#5c5c5c"/><rect x="17" y="531.3" width="2" height="1" fill="#5c5c5c"/><rect x="17" y="539.7" width="2" height="1" fill="#5c5c5c"/><rect x="17" y="548.0" width="2" height="1" fill="#5c5c5c"/><rect x="1" y="514.6" width="18" height="1" fill="#7a7a7a"/><rect x="17" y="564.8" width="2" height="1" fill="#5c5c5c"/><rect x="17" y="573.1" width="2" height="1" fill="#5c5c5c"/><rect x="17" y="581.5" width="2" height="1" fill="#5c5c5c"/><rect x="17" y="589.8" width="2" height="1" fill="#5c5c5c"/><rect x="1" y="556.4" width="18" height="1" fill="#7a7a7a"/><rect x="17" y="606.6" width="2" height="1" fill="#5c5c5c"/><rect x="17" y="614.9" width="2" height="1" fill="#5c5c5c"/><rect x="17" y="623.3" width="2" height="1" fill="#5c5c5c"/><rect x="17" y="631.6" width="2" height="1" fill="#5c5c5c"/><rect x="1" y="598.2" width="18" height="1" fill="#7a7a7a"/><rect x="17" y="648.4" width="2" height="1" fill="#5c5c5c"/><rect x="17" y="656.7" width="2" height="1" fill="#5c5c5c"/><rect x="17" y="665.1" width="2" height="1" fill="#5c5c5c"/><rect x="17" y="673.4" width="2" height="1" fill="#5c5c5c"/><rect x="1" y="640.0" width="18" height="1" fill="#7a7a7a"/><rect x="17" y="690.2" width="2" height="1" fill="#5c5c5c"/><rect x="17" y="698.5" width="2" height="1" fill="#5c5c5c"/><rect x="17" y="706.9" width="2" height="1" fill="#5c5c5c"/><rect x="17" y="715.2" width="2" height="1" fill="#5c5c5c"/><rect x="1" y="681.8" width="18" height="1" fill="#7a7a7a"/><rect x="17" y="732.0" width="2" height="1" fill="#5c5c5c"/><rect x="17" y="740.3" width="2" height="1" fill="#5c5c5c"/><rect x="17" y="748.7" width="2" height="1" fill="#5c5c5c"/><rect x="17" y="757.0" width="2" height="1" fill="#5c5c5c"/><rect x="1" y="723.6" width="18" height="1" fill="#7a7a7a"/><rect x="17" y="773.8" width="2" height="1" fill="#5c5c5c"/><rect x="1" y="765.4" width="18" height="1" fill="#7a7a7a"/></svg>
<div class="t" style="left:46.5px;top:136.53px;font-size:10px;color:#a0a0a0;font-weight:normal;">5</div>
<div class="t" style="left:46.5px;top:146.53px;font-size:10px;color:#a0a0a0;font-weight:normal;">0</div>
<div class="t" style="left:46.5px;top:156.53px;font-size:10px;color:#a0a0a0;font-weight:normal;">0</div>
<div class="t" style="left:46.5px;top:178.34px;font-size:10px;color:#a0a0a0;font-weight:normal;">4</div>
<div class="t" style="left:46.5px;top:188.34px;font-size:10px;color:#a0a0a0;font-weight:normal;">0</div>
<div class="t" style="left:46.5px;top:198.34px;font-size:10px;color:#a0a0a0;font-weight:normal;">0</div>
<div class="t" style="left:46.5px;top:220.14px;font-size:10px;color:#a0a0a0;font-weight:normal;">3</div>
<div class="t" style="left:46.5px;top:230.14px;font-size:10px;color:#a0a0a0;font-weight:normal;">0</div>
<div class="t" style="left:46.5px;top:240.14px;font-size:10px;color:#a0a0a0;font-weight:normal;">0</div>
<div class="t" style="left:46.5px;top:261.94px;font-size:10px;color:#a0a0a0;font-weight:normal;">2</div>
<div class="t" style="left:46.5px;top:271.94px;font-size:10px;color:#a0a0a0;font-weight:normal;">0</div>
<div class="t" style="left:46.5px;top:281.94px;font-size:10px;color:#a0a0a0;font-weight:normal;">0</div>
<div class="t" style="left:46.5px;top:303.74px;font-size:10px;color:#a0a0a0;font-weight:normal;">1</div>
<div class="t" style="left:46.5px;top:313.74px;font-size:10px;color:#a0a0a0;font-weight:normal;">0</div>
<div class="t" style="left:46.5px;top:323.74px;font-size:10px;color:#a0a0a0;font-weight:normal;">0</div>
<div class="t" style="left:46.5px;top:345.54px;font-size:10px;color:#a0a0a0;font-weight:normal;">0</div>
<div class="t" style="left:46.5px;top:387.34px;font-size:10px;color:#a0a0a0;font-weight:normal;">1</div>
<div class="t" style="left:46.5px;top:397.34px;font-size:10px;color:#a0a0a0;font-weight:normal;">0</div>
<div class="t" style="left:46.5px;top:407.34px;font-size:10px;color:#a0a0a0;font-weight:normal;">0</div>
<div class="t" style="left:46.5px;top:429.14px;font-size:10px;color:#a0a0a0;font-weight:normal;">2</div>
<div class="t" style="left:46.5px;top:439.14px;font-size:10px;color:#a0a0a0;font-weight:normal;">0</div>
<div class="t" style="left:46.5px;top:449.14px;font-size:10px;color:#a0a0a0;font-weight:normal;">0</div>
<div class="t" style="left:46.5px;top:470.94px;font-size:10px;color:#a0a0a0;font-weight:normal;">3</div>
<div class="t" style="left:46.5px;top:480.94px;font-size:10px;color:#a0a0a0;font-weight:normal;">0</div>
<div class="t" style="left:46.5px;top:490.94px;font-size:10px;color:#a0a0a0;font-weight:normal;">0</div>
<div class="t" style="left:46.5px;top:512.74px;font-size:10px;color:#a0a0a0;font-weight:normal;">4</div>
<div class="t" style="left:46.5px;top:522.74px;font-size:10px;color:#a0a0a0;font-weight:normal;">0</div>
<div class="t" style="left:46.5px;top:532.74px;font-size:10px;color:#a0a0a0;font-weight:normal;">0</div>
<div class="t" style="left:46.5px;top:554.53px;font-size:10px;color:#a0a0a0;font-weight:normal;">5</div>
<div class="t" style="left:46.5px;top:564.53px;font-size:10px;color:#a0a0a0;font-weight:normal;">0</div>
<div class="t" style="left:46.5px;top:574.53px;font-size:10px;color:#a0a0a0;font-weight:normal;">0</div>
<div class="t" style="left:46.5px;top:596.33px;font-size:10px;color:#a0a0a0;font-weight:normal;">6</div>
<div class="t" style="left:46.5px;top:606.33px;font-size:10px;color:#a0a0a0;font-weight:normal;">0</div>
<div class="t" style="left:46.5px;top:616.33px;font-size:10px;color:#a0a0a0;font-weight:normal;">0</div>
<div class="t" style="left:46.5px;top:638.13px;font-size:10px;color:#a0a0a0;font-weight:normal;">7</div>
<div class="t" style="left:46.5px;top:648.13px;font-size:10px;color:#a0a0a0;font-weight:normal;">0</div>
<div class="t" style="left:46.5px;top:658.13px;font-size:10px;color:#a0a0a0;font-weight:normal;">0</div>
<div class="t" style="left:46.5px;top:679.93px;font-size:10px;color:#a0a0a0;font-weight:normal;">8</div>
<div class="t" style="left:46.5px;top:689.93px;font-size:10px;color:#a0a0a0;font-weight:normal;">0</div>
<div class="t" style="left:46.5px;top:699.93px;font-size:10px;color:#a0a0a0;font-weight:normal;">0</div>
<div class="t" style="left:46.5px;top:721.74px;font-size:10px;color:#a0a0a0;font-weight:normal;">9</div>
<div class="t" style="left:46.5px;top:731.74px;font-size:10px;color:#a0a0a0;font-weight:normal;">0</div>
<div class="t" style="left:46.5px;top:741.74px;font-size:10px;color:#a0a0a0;font-weight:normal;">0</div>
<div class="t" style="left:46.5px;top:763.53px;font-size:10px;color:#a0a0a0;font-weight:normal;">1</div>
<div class="t" style="left:46.5px;top:773.53px;font-size:10px;color:#a0a0a0;font-weight:normal;">0</div>
<div class="t" style="left:46.5px;top:783.53px;font-size:10px;color:#a0a0a0;font-weight:normal;">0</div>
<div class="t" style="left:46.5px;top:793.53px;font-size:10px;color:#a0a0a0;font-weight:normal;">0</div>
<div class="t" style="left:46.5px;top:805.33px;font-size:10px;color:#a0a0a0;font-weight:normal;">1</div>
<div class="t" style="left:46.5px;top:815.33px;font-size:10px;color:#a0a0a0;font-weight:normal;">1</div>
<div class="t" style="left:46.5px;top:825.33px;font-size:10px;color:#a0a0a0;font-weight:normal;">0</div>
<div class="t" style="left:46.5px;top:835.33px;font-size:10px;color:#a0a0a0;font-weight:normal;">0</div>
<div class="t" style="left:46.5px;top:847.13px;font-size:10px;color:#a0a0a0;font-weight:normal;">1</div>
<div class="t" style="left:46.5px;top:857.13px;font-size:10px;color:#a0a0a0;font-weight:normal;">2</div>
<div class="t" style="left:46.5px;top:867.13px;font-size:10px;color:#a0a0a0;font-weight:normal;">0</div>
<div class="t" style="left:46.5px;top:877.13px;font-size:10px;color:#a0a0a0;font-weight:normal;">0</div>
<div class="t" style="left:46.5px;top:888.93px;font-size:10px;color:#a0a0a0;font-weight:normal;">1</div>
<div class="a" style="left:883px;top:100px;width:21px;height:799px;background:#292929;"></div>
<div class="a" style="left:883px;top:121px;width:4px;height:778px;background:#222222;"></div>
<div class="a" style="left:899px;top:100px;width:5px;height:819px;background:#262626;"></div>
<div class="a" style="left:887px;top:311px;width:12px;height:329px;background:#4b4b4b;"></div>
<svg style="left:889px;top:109px" width="10" height="6" viewBox="0 0 10 6"><path d="M1,5 L5,1 L9,5" fill="none" stroke="#8c8c8c" stroke-width="1.3"/></svg>
<svg style="left:888px;top:886px" width="11" height="7" viewBox="0 0 11 7"><path d="M1,1 L5.5,5.5 L10,1" fill="none" stroke="#8c8c8c" stroke-width="1.3"/></svg>
<div class="a" style="left:40px;top:899px;width:864px;height:16px;background:#2a2a2a;"></div>
<div class="a" style="left:40px;top:899px;width:48px;height:16px;background:#262626;"></div>
<div class="t" style="left:43.5px;top:901.42px;font-size:12.5px;color:#eaeaea;font-weight:normal;">41,83%</div>
<div class="t" style="left:97.5px;top:901.59px;font-size:12.3px;color:#b4b4b4;font-weight:normal;">1920 Px x 1080 Px (72 ppl)</div>
<svg style="left:260px;top:903px" width="8" height="11" viewBox="0 0 8 11"><path d="M1.5,1 L6,5.5 L1.5,10" fill="none" stroke="#b4b4b4" stroke-width="1.3"/></svg>
<div class="a" style="left:272px;top:899px;width:611px;height:16px;background:#262626;"></div>
<svg style="left:279px;top:903px" width="8" height="11" viewBox="0 0 8 11"><path d="M6,1 L1.5,5.5 L6,10" fill="none" stroke="#8c8c8c" stroke-width="1.3"/></svg>
<div class="a" style="left:455px;top:902px;width:210px;height:11px;background:#4a4a4a;"></div>
<svg style="left:872px;top:903px" width="8" height="11" viewBox="0 0 8 11"><path d="M1.5,1 L6,5.5 L1.5,10" fill="none" stroke="#8c8c8c" stroke-width="1.3"/></svg>
<div class="a" style="left:0px;top:915px;width:1258px;height:4px;background:#222222;"></div>
<div class="a" style="left:40px;top:718px;width:12px;height:2px;background:#d8d8d8;"></div>
<div class="a" style="left:59px;top:121px;width:824px;height:778px;background:#1b1b1b;"></div>
<div class="a" style="left:143px;top:342px;width:710px;height:455px;background:#141414;"></div>
<div class="a" style="left:144px;top:343px;width:708px;height:453px;background:#ffffff;"></div>
<svg style="left:0;top:0" width="1258" height="919" viewBox="0 0 1258 919">
<defs>
<clipPath id="mc"><path d="M480,443 C489.5,443.2 503.3,444.3 515,446.5 C526.7,448.7 538.5,452.1 550,456 C561.5,459.9 572.5,464.2 584,470 C595.5,475.8 608.8,483.2 619,491 C629.2,498.8 637.7,507.5 645,517 C652.3,526.5 658.8,538.3 663,548 C667.2,557.7 669.1,568.0 670.5,575 C671.9,582.0 671.9,584.8 671.5,590 C671.1,595.2 670.3,599.8 668,606 C665.7,612.2 662.7,619.5 657.5,627 C652.3,634.5 644.6,644.5 637,651 C629.4,657.5 620.5,661.8 612,666 C603.5,670.2 596.0,672.8 586,676 C576.0,679.2 564.0,682.9 552,685.5 C540.0,688.1 525.0,690.2 514,691.5 C503.0,692.8 495.5,693.2 486,693 C476.5,692.8 466.3,691.7 457,690 C447.7,688.3 438.2,685.7 430,683 C421.8,680.3 414.8,677.2 408,674 C401.2,670.8 395.5,667.9 389,663.6 C382.5,659.3 374.5,653.3 369,648 C363.5,642.7 359.7,637.5 356,632 C352.3,626.5 349.3,620.3 347,615 C344.7,609.7 343.3,605.8 342.4,600 C341.5,594.2 341.3,587.7 341.7,580 C342.1,572.3 343.5,562.8 345,554 C346.5,545.2 348.0,534.9 350.7,527 C353.4,519.1 356.5,512.9 361,506.4 C365.5,499.9 370.7,494.6 377.5,488 C384.3,481.4 392.8,472.9 402,467 C411.2,461.1 423.7,456.3 433,452.7 C442.3,449.1 450.2,447.1 458,445.5 C465.8,443.9 470.5,442.8 480,443 Z"/></clipPath>
<linearGradient id="mbase" x1="450" y1="445" x2="555" y2="690" gradientUnits="userSpaceOnUse">
 <stop offset="0" stop-color="#d8392c"/>
 <stop offset="0.15" stop-color="#de4e30"/>
 <stop offset="0.3" stop-color="#e5783a"/>
 <stop offset="0.5" stop-color="#e8a040"/>
 <stop offset="0.72" stop-color="#d6ac36"/>
 <stop offset="1" stop-color="#c9a636"/>
</linearGradient>
<radialGradient id="mpink" cx="405" cy="575" r="62" gradientUnits="userSpaceOnUse">
 <stop offset="0" stop-color="#eeaa80" stop-opacity="0.8"/>
 <stop offset="1" stop-color="#eeaa80" stop-opacity="0"/>
</radialGradient>
<radialGradient id="myel" cx="640" cy="585" r="65" gradientUnits="userSpaceOnUse">
 <stop offset="0" stop-color="#e2c85a" stop-opacity="0.85"/>
 <stop offset="1" stop-color="#e2c85a" stop-opacity="0"/>
</radialGradient>
<radialGradient id="mgreen" cx="540" cy="660" r="80" gradientUnits="userSpaceOnUse">
 <stop offset="0" stop-color="#c9a52a" stop-opacity="0.6"/>
 <stop offset="1" stop-color="#c9a52a" stop-opacity="0"/>
</radialGradient>
<radialGradient id="mred" cx="420" cy="485" r="70" gradientUnits="userSpaceOnUse">
 <stop offset="0" stop-color="#d93228" stop-opacity="0.5"/>
 <stop offset="1" stop-color="#d93228" stop-opacity="0"/>
</radialGradient>
<radialGradient id="mleft" cx="365" cy="625" r="55" gradientUnits="userSpaceOnUse">
 <stop offset="0" stop-color="#e07038" stop-opacity="0.8"/>
 <stop offset="1" stop-color="#e2783a" stop-opacity="0"/>
</radialGradient>
<radialGradient id="medge" cx="500" cy="560" r="175" gradientTransform="translate(500 560) scale(1 0.76) translate(-500 -560)" gradientUnits="userSpaceOnUse">
 <stop offset="0.82" stop-color="#ffffff" stop-opacity="0"/>
 <stop offset="1" stop-color="#f4dc9a" stop-opacity="0.22"/>
</radialGradient>
<filter id="spk" x="330" y="430" width="360" height="280" filterUnits="userSpaceOnUse">
 <feTurbulence type="fractalNoise" baseFrequency="0.55" numOctaves="1" seed="3" result="n"/>
 <feColorMatrix in="n" type="matrix" values="0 0 0 0 0.6  0 0 0 0 0.25  0 0 0 0 0.1  0 0 0 -2.4 1.4" result="c"/>
 <feComposite in="c" in2="SourceGraphic" operator="in"/>
</filter>
<filter id="soft" x="320" y="420" width="380" height="300" filterUnits="userSpaceOnUse"><feGaussianBlur stdDeviation="0.7"/></filter>
</defs>
<path d="M328,532 Q337,527 350,531 L351,550 Q339,552 329,549 Q324,540 328,532 Z" fill="#9a8040"/>
<path d="M328,533 Q323,541 329,549 Q333,541 331,533 Z" fill="#553a18"/>
<g clip-path="url(#mc)" filter="url(#soft)">
 <rect x="330" y="430" width="360" height="280" fill="url(#mbase)"/>
 <rect x="330" y="430" width="360" height="280" fill="url(#mred)"/>
 <rect x="330" y="430" width="360" height="280" fill="url(#mleft)"/>
 <rect x="330" y="430" width="360" height="280" fill="url(#mpink)"/>
 <rect x="330" y="430" width="360" height="280" fill="url(#myel)"/>
 <rect x="330" y="430" width="360" height="280" fill="url(#mgreen)"/>
 <rect x="330" y="430" width="360" height="280" fill="url(#medge)"/>
 <rect x="330" y="430" width="360" height="280" fill="#000" filter="url(#spk)" opacity="0.3"/>
</g>
</svg>
<div class="t" style="left:408.5px;top:511.55px;font-size:65.5px;color:#ffffff;font-weight:bold;transform:scaleX(0.868);transform-origin:0 0;-webkit-text-stroke:1.3px #fff">FRESH</div>
<div class="a" style="left:904px;top:72px;width:354px;height:12px;background:#262626;"></div>
<svg style="left:927px;top:74px" width="10" height="8" viewBox="0 0 10 8"><path d="M4,1 L1.5,4 L4,7 M8,1 L5.5,4 L8,7" fill="none" stroke="#bdbdbd" stroke-width="1.2"/></svg>
<svg style="left:1238px;top:74px" width="10" height="8" viewBox="0 0 10 8"><path d="M1,1 L3.5,4 L1,7 M5,1 L7.5,4 L5,7" fill="none" stroke="#bdbdbd" stroke-width="1.2"/></svg>
<div class="a" style="left:904px;top:84px;width:40px;height:835px;background:#282828;"></div>
<div class="a" style="left:904px;top:86px;width:39px;height:67px;background:#323232;"></div>
<div class="a" style="left:917px;top:89px;width:14px;height:2px;background:#2c2c2c;"></div>
<div class="a" style="left:904px;top:157px;width:39px;height:37px;background:#323232;"></div>
<div class="a" style="left:917px;top:160px;width:14px;height:2px;background:#2c2c2c;"></div>
<div class="a" style="left:904px;top:198px;width:39px;height:64px;background:#323232;"></div>
<div class="a" style="left:917px;top:201px;width:14px;height:2px;background:#2c2c2c;"></div>
<div class="a" style="left:904px;top:266px;width:39px;height:38px;background:#323232;"></div>
<div class="a" style="left:917px;top:269px;width:14px;height:2px;background:#2c2c2c;"></div>
<div class="a" style="left:904px;top:308px;width:39px;height:65px;background:#323232;"></div>
<div class="a" style="left:917px;top:311px;width:14px;height:2px;background:#2c2c2c;"></div>
<div class="a" style="left:904px;top:377px;width:39px;height:35px;background:#323232;"></div>
<div class="a" style="left:917px;top:380px;width:14px;height:2px;background:#2c2c2c;"></div>
<div class="a" style="left:905px;top:416px;width:38px;height:499px;background:#2c2c2c;"></div>
<div class="a" style="left:943px;top:84px;width:1px;height:835px;background:#222222;"></div>
<svg style="left:914px;top:98px" width="20" height="20" viewBox="0 0 20 20"><rect x="1.5" y="1.5" width="5" height="5" fill="none" stroke="#d4d4d4" stroke-width="1.3"/><rect x="1.5" y="7.5" width="5" height="5" fill="none" stroke="#d4d4d4" stroke-width="1.3"/><rect x="1" y="13.5" width="6" height="5" fill="#d4d4d4"/><path d="M11.5,4 Q17.5,4 17.5,9.5 Q17.5,14.5 12.5,16" fill="none" stroke="#d4d4d4" stroke-width="2"/><path d="M9,4 L13,0.8 V7.2 Z" fill="#d4d4d4"/></svg>
<svg style="left:916px;top:128px" width="16" height="16" viewBox="0 0 16 16"><path d="M1,0.5 L15,7.8 L1,15 Z" fill="#d4d4d4"/></svg>
<svg style="left:913px;top:168px" width="20" height="17" viewBox="0 0 20 17"><path d="M0,3 H19 M0,8.5 H19 M0,14 H19" stroke="#d4d4d4" stroke-width="1.2"/><circle cx="6" cy="3" r="2.3" fill="#323232" stroke="#d4d4d4" stroke-width="1.3"/><circle cx="13" cy="8.5" r="2.3" fill="#323232" stroke="#d4d4d4" stroke-width="1.3"/><circle cx="7" cy="14" r="2.3" fill="#323232" stroke="#d4d4d4" stroke-width="1.3"/></svg>
<svg style="left:913px;top:207px" width="21" height="21" viewBox="0 0 21 21"><path d="M0.5,1.5 H2.5 M4,1.5 H7 M0.5,5 H2.5 M4,5 H7 M0.5,8.5 H2.5 M4,8.5 H7" stroke="#d4d4d4" stroke-width="1.3"/><path d="M20,3 L12,12 L10.5,10.5 Z" fill="#d4d4d4"/><path d="M10,11 Q6.5,11 5.5,14.5 Q5,17.5 3,19.5 Q8,20 10.5,17 Q12.5,14.5 11.5,12.5 Z" fill="#d4d4d4"/></svg>
<svg style="left:913px;top:236px" width="21" height="18" viewBox="0 0 21 18"><path d="M1,1.5 Q5,-1 8,2.5 Q5,6 1,3.5 Z" fill="#d4d4d4"/><path d="M8,2.5 H18" stroke="#d4d4d4" stroke-width="1.5"/><path d="M3,11 H13" stroke="#d4d4d4" stroke-width="1.5"/><path d="M13,8 Q20,9 19,13 Q18,17 13,15 Z" fill="#d4d4d4"/></svg>
<svg style="left:913px;top:276px" width="21" height="20" viewBox="0 0 21 20"><path d="M0.5,1.5 H2.5 M4,1.5 H7 M0.5,5 H2.5 M4,5 H7 M0.5,8.5 H2.5 M4,8.5 H7" stroke="#d4d4d4" stroke-width="1.3"/><circle cx="13" cy="5" r="3.3" fill="#d4d4d4"/><path d="M11.5,7 H14.5 V10 H19 Q20,10 20,11.5 V13.5 H6 V11.5 Q6,10 7,10 H11.5 Z" fill="#d4d4d4"/><rect x="6" y="15.5" width="14" height="1.5" fill="#d4d4d4"/></svg>
<div class="t" style="left:915px;top:320.96px;font-size:16px;color:#d4d4d4;font-weight:normal;">A</div>
<div class="a" style="left:929px;top:319px;width:1px;height:16px;background:#d4d4d4;"></div>
<svg style="left:917px;top:346px" width="13" height="18" viewBox="0 0 13 18"><path d="M6,1 H12 M8,1 V17 M11,1 V17" stroke="#d4d4d4" stroke-width="1.5"/><path d="M7,1 Q1,1 1,5 Q1,9 7,9 Z" fill="#d4d4d4"/></svg>
<svg style="left:914px;top:387px" width="18" height="19" viewBox="0 0 18 19"><path d="M9,1 L16.5,5 V14 L9,18 L1.5,14 V5 Z" fill="#555" stroke="#d4d4d4" stroke-width="1.3" stroke-linejoin="round"/><path d="M1.5,5 L9,9 L16.5,5 M9,9 V18" fill="none" stroke="#d4d4d4" stroke-width="1.3"/></svg>
<div class="a" style="left:944px;top:84px;width:314px;height:835px;background:#323232;"></div>
<div class="a" style="left:944px;top:84px;width:314px;height:28px;background:#262626;"></div>
<div class="a" style="left:944px;top:85px;width:89px;height:27px;background:#2a2a2a;"></div>
<div class="a" style="left:1033px;top:85px;width:84px;height:27px;background:#323232;"></div>
<div class="t" style="left:954px;top:92.84px;font-size:12px;color:#a8a8a8;font-weight:bold;letter-spacing:-0.2px">Bibliotheken</div>
<div class="t" style="left:1042.5px;top:92.84px;font-size:12px;color:#ececec;font-weight:bold;letter-spacing:-0.2px">Korrektur</div>
<div class="t" style="left:954.5px;top:122.59px;font-size:12.3px;color:#b8b8b8;font-weight:normal;">Korrektur hinzufügen</div>
<svg style="left:1021px;top:146px" width="19" height="18" viewBox="0 0 19 18"><circle cx="9.5" cy="9" r="4.8" fill="none" stroke="#d8d8d8" stroke-width="1.3"/><path d="M9.5,4.2 A4.8,4.8 0 0 0 9.5,13.8 Z" fill="#323232"/><path d="M9.5,4.2 A4.8,4.8 0 0 1 9.5,13.8 Z" fill="#d8d8d8"/><path d="M9.5,0 V2 M9.5,16 V18 M0.5,9 H2.5 M16.5,9 H18.5 M3,2.5 L4.3,3.8 M14.7,14.2 L16,15.5 M16,2.5 L14.7,3.8 M4.3,14.2 L3,15.5" stroke="#d8d8d8" stroke-width="1.3"/></svg>
<svg style="left:1046px;top:149px" width="18" height="13" viewBox="0 0 18 13"><path d="M0,12.5 V8 L1.5,5 L3,8.5 L4.5,3 L6,8 L7.5,1.5 L9,0 L10.5,7 L12,3 L13.5,8 L15,4 L16.5,7.5 L18,5 V12.5 Z" fill="#d8d8d8"/></svg>
<svg style="left:1071px;top:149px" width="17" height="13" viewBox="0 0 17 13"><rect x="0.6" y="0.6" width="15.8" height="12" fill="none" stroke="#d8d8d8" stroke-width="1.1"/><path d="M0.6,4.6 H16.4 M0.6,8.6 H16.4 M5.8,0.6 V12.6 M11,0.6 V12.6" stroke="#d8d8d8" stroke-width="0.8"/><path d="M1.5,12 Q9,11 15.5,1" fill="none" stroke="#d8d8d8" stroke-width="1.3"/></svg>
<svg style="left:1010px;top:176px" width="18" height="14" viewBox="0 0 18 14"><rect x="0.6" y="0.6" width="16.5" height="12" fill="none" stroke="#d8d8d8" stroke-width="1.2"/><path d="M3,1 V5 M6,1 V5 M9,1 V5 M12,1 V5" stroke="#d8d8d8" stroke-width="1.4"/><defs><linearGradient id="lg2"><stop offset="0" stop-color="#222"/><stop offset="1" stop-color="#ddd"/></linearGradient></defs><rect x="1.2" y="6.5" width="15.3" height="5.5" fill="url(#lg2)"/></svg>
<svg style="left:1033px;top:174px" width="20" height="16" viewBox="0 0 20 16"><circle cx="10" cy="2.5" r="1.8" fill="none" stroke="#d8d8d8" stroke-width="1.1"/><path d="M1,4 H19 M4,4 L1,10 M4,4 L7,10 M16,4 L13,10 M16,4 L19,10" stroke="#d8d8d8" stroke-width="1"/><path d="M0.5,10 H7.5 Q7.5,14.5 4,14.5 Q0.5,14.5 0.5,10 Z M12.5,10 H19.5 Q19.5,14.5 16,14.5 Q12.5,14.5 12.5,10 Z" fill="#d8d8d8"/></svg>
<svg style="left:1059px;top:176px" width="17" height="13" viewBox="0 0 17 13"><rect x="0.6" y="0.6" width="15.5" height="11.8" fill="#323232" stroke="#d8d8d8" stroke-width="1.2"/><rect x="7" y="0.6" width="9" height="11.8" fill="#d8d8d8"/></svg>
<svg style="left:1081px;top:175px" width="8" height="15" viewBox="0 0 8 15"><path d="M0,4 H3 L4,2 H8 V14 H0 Z" fill="#d8d8d8"/></svg>
<svg style="left:1022px;top:202px" width="17" height="14" viewBox="0 0 17 14"><rect x="0.6" y="0.6" width="15.5" height="12.5" fill="#444" stroke="#d8d8d8" stroke-width="1.2"/><path d="M2,12 Q6,10 8,7 Q10,4 15,2" stroke="#d8d8d8" stroke-width="1.5" fill="none"/><ellipse cx="8.5" cy="6.8" rx="3.5" ry="2.5" fill="#d8d8d8" transform="rotate(-35 8.5 6.8)"/></svg>
<svg style="left:1047px;top:202px" width="17" height="14" viewBox="0 0 17 14"><defs><linearGradient id="lg3" x1="0" y1="0" x2="1" y2="1"><stop offset="0" stop-color="#555"/><stop offset="0.5" stop-color="#ddd"/><stop offset="1" stop-color="#444"/></linearGradient></defs><rect x="0.6" y="0.6" width="15.5" height="12.5" fill="url(#lg3)" stroke="#d8d8d8" stroke-width="1.2"/></svg>
<svg style="left:1070px;top:202px" width="18" height="14" viewBox="0 0 18 14"><rect x="0.6" y="0.6" width="17" height="12.5" fill="#e0e0e0" stroke="#d8d8d8" stroke-width="1.2"/><path d="M1,12 L5,8 L8,9 L12,4 L17,2 V5 L12,7 L8,12 L5,11 L2,13 Z" fill="#222"/></svg>
<div class="a" style="left:944px;top:499px;width:314px;height:2px;background:#232323;"></div>
<div class="a" style="left:944px;top:501px;width:314px;height:27px;background:#262626;"></div>
<div class="a" style="left:944px;top:501px;width:58px;height:27px;background:#323232;"></div>
<div class="a" style="left:1002px;top:501px;width:58px;height:27px;background:#2a2a2a;"></div>
<div class="t" style="left:954px;top:509.34px;font-size:12px;color:#ececec;font-weight:bold;letter-spacing:-0.3px">Ebenen</div>
<div class="t" style="left:1011.5px;top:509.34px;font-size:12px;color:#a8a8a8;font-weight:bold;letter-spacing:-0.3px">Kanäle</div>
<div class="a" style="left:948px;top:538px;width:101px;height:22px;background:#262626;border:1px solid #3a3a3a"></div>
<svg style="left:955px;top:545px" width="12" height="12" viewBox="0 0 12 12"><circle cx="4.5" cy="4.5" r="3.3" fill="none" stroke="#e0e0e0" stroke-width="1.8"/><path d="M7,7 L10.5,10.5" stroke="#e0e0e0" stroke-width="2.2"/></svg>
<div class="t" style="left:971px;top:542.92px;font-size:12.5px;color:#e6e6e6;font-weight:normal;">Art</div>
<svg style="left:1038px;top:547px" width="9" height="6" viewBox="0 0 9 6"><path d="M1,1 L4.5,4.5 L8,1" fill="none" stroke="#a8a8a8" stroke-width="1.3"/></svg>
<div class="a" style="left:1053px;top:538px;width:1px;height:22px;background:#2c2c2c;"></div>
<div class="a" style="left:947px;top:568px;width:200px;height:23px;background:#262626;border:1px solid #3a3a3a"></div>
<div class="t" style="left:957px;top:573.42px;font-size:12.5px;color:#e6e6e6;font-weight:normal;">Normal</div>
<div class="t" style="left:951.5px;top:602.09px;font-size:12.3px;color:#b0b0b0;font-weight:normal;">Fixieren:</div>
<svg style="left:1006px;top:603px" width="11" height="11" viewBox="0 0 11 11"><rect x="0.5" y="0.5" width="10" height="10" fill="none" stroke="#9a9a9a" stroke-width="1"/><rect x="2" y="2" width="2.3" height="2.3" fill="#9a9a9a"/><rect x="6.5" y="2" width="2.3" height="2.3" fill="#9a9a9a"/><rect x="4.3" y="4.3" width="2.3" height="2.3" fill="#9a9a9a"/><rect x="2" y="6.5" width="2.3" height="2.3" fill="#9a9a9a"/><rect x="6.5" y="6.5" width="2.3" height="2.3" fill="#9a9a9a"/></svg>
<svg style="left:1027px;top:601px" width="14" height="15" viewBox="0 0 14 15"><path d="M13.5,0.5 L6,9 L5,8 Z" fill="#777"/><path d="M4.5,8.5 Q2,9 1.5,11.5 Q1.2,13.5 0,14.5 Q3.5,14.8 5.5,13 Q6.8,11.5 6,9.5 Z" fill="#777"/></svg>
<svg style="left:1048px;top:601px" width="15" height="15" viewBox="0 0 15 15"><path d="M7.5,1 V14 M1,7.5 H14" stroke="#d8d8d8" stroke-width="1.4"/><path d="M7.5,0 L10,2.8 H5 Z M7.5,15 L10,12.2 H5 Z M0,7.5 L2.8,5 V10 Z M15,7.5 L12.2,5 V10 Z" fill="#d8d8d8"/></svg>
<svg style="left:1070px;top:601px" width="17" height="16" viewBox="0 0 17 16"><path d="M3,1 V14 H16 M0,4 H13 V16" fill="none" stroke="#d8d8d8" stroke-width="1.2" stroke-dasharray="2,1"/><path d="M3,4 H9 L13,8 V14 H3 Z" fill="none" stroke="#d8d8d8" stroke-width="1.3"/></svg>
<div class="a" style="left:944px;top:627px;width:314px;height:264px;background:#2b2b2b;"></div>
<div class="a" style="left:944px;top:627px;width:314px;height:24px;background:#262626;"></div>
<div class="a" style="left:944px;top:651px;width:31px;height:32px;background:#2e2e2e;"></div>
<div class="a" style="left:975px;top:651px;width:283px;height:32px;background:#474747;"></div>
<div class="a" style="left:944px;top:683px;width:314px;height:30px;background:#2d2d2d;"></div>
<svg style="left:952px;top:634.5px" width="15" height="10" viewBox="0 0 15 10"><path d="M0.5,5 Q7.5,-2.5 14.5,5 Q7.5,12.5 0.5,5 Z" fill="#e6e6e6"/><circle cx="7.5" cy="5" r="2.6" fill="#2b2b2b"/><circle cx="8.3" cy="4.2" r="0.9" fill="#e6e6e6"/></svg>
<svg style="left:952px;top:664px" width="15" height="10" viewBox="0 0 15 10"><path d="M0.5,5 Q7.5,-2.5 14.5,5 Q7.5,12.5 0.5,5 Z" fill="#e6e6e6"/><circle cx="7.5" cy="5" r="2.6" fill="#2b2b2b"/><circle cx="8.3" cy="4.2" r="0.9" fill="#e6e6e6"/></svg>
<svg style="left:952px;top:695px" width="15" height="10" viewBox="0 0 15 10"><path d="M0.5,5 Q7.5,-2.5 14.5,5 Q7.5,12.5 0.5,5 Z" fill="#e6e6e6"/><circle cx="7.5" cy="5" r="2.6" fill="#2b2b2b"/><circle cx="8.3" cy="4.2" r="0.9" fill="#e6e6e6"/></svg>
<svg style="left:977px;top:635px" width="10" height="7" viewBox="0 0 10 7"><path d="M1,1 L5,5 L9,1" fill="none" stroke="#a0a0a0" stroke-width="1.2"/></svg>
<div class="t" style="left:997px;top:633.42px;font-size:12.5px;color:#f0f0f0;font-weight:bold;letter-spacing:-0.2px">Zeichenfläche 1</div>
<svg style="left:992px;top:655px" width="37" height="26" viewBox="0 0 37 26"><path d="M0.6,6 V0.6 H7 M30,0.6 H36.4 V6 M36.4,20 V25.4 H30 M7,25.4 H0.6 V20" fill="none" stroke="#f0f0f0" stroke-width="1.3"/><path d="M13,7 H24 V10.5 H22.8 V8.6 H19.5 V17.6 H21.2 V19 H15.8 V17.6 H17.5 V8.6 H14.2 V10.5 H13 Z" fill="#e8e8e8"/></svg>
<div class="t" style="left:1037px;top:663.77px;font-size:11.5px;color:#e6e6e6;font-weight:normal;letter-spacing:-0.5px">FRESH</div>
<svg style="left:995px;top:690px" width="32" height="20" viewBox="0 0 32 20"><rect x="0" y="0" width="32" height="20" fill="#ffffff"/><rect x="0" y="0" width="4" height="4" fill="#c8d0dc"/><rect x="0" y="8" width="4" height="4" fill="#c8d0dc"/><rect x="0" y="16" width="4" height="4" fill="#c8d0dc"/><rect x="4" y="4" width="4" height="4" fill="#c8d0dc"/><rect x="4" y="12" width="4" height="4" fill="#c8d0dc"/><rect x="8" y="0" width="4" height="4" fill="#c8d0dc"/><rect x="8" y="8" width="4" height="4" fill="#c8d0dc"/><rect x="8" y="16" width="4" height="4" fill="#c8d0dc"/><rect x="12" y="4" width="4" height="4" fill="#c8d0dc"/><rect x="12" y="12" width="4" height="4" fill="#c8d0dc"/><rect x="16" y="0" width="4" height="4" fill="#c8d0dc"/><rect x="16" y="8" width="4" height="4" fill="#c8d0dc"/><rect x="16" y="16" width="4" height="4" fill="#c8d0dc"/><rect x="20" y="4" width="4" height="4" fill="#c8d0dc"/><rect x="20" y="12" width="4" height="4" fill="#c8d0dc"/><rect x="24" y="0" width="4" height="4" fill="#c8d0dc"/><rect x="24" y="8" width="4" height="4" fill="#c8d0dc"/><rect x="24" y="16" width="4" height="4" fill="#c8d0dc"/><rect x="28" y="4" width="4" height="4" fill="#c8d0dc"/><rect x="28" y="12" width="4" height="4" fill="#c8d0dc"/><ellipse cx="16" cy="10" rx="9" ry="6.5" fill="#e69030"/><ellipse cx="13" cy="8" rx="5" ry="3.5" fill="#e6602c" opacity="0.6"/></svg>
<div class="t" style="left:1037px;top:692.92px;font-size:12.5px;color:#e6e6e6;font-weight:normal;">Mango</div>
<div class="a" style="left:944px;top:891px;width:314px;height:24px;background:#323232;"></div>
<svg style="left:1051px;top:899px" width="15" height="9" viewBox="0 0 15 9"><path d="M5,1 H3.5 Q0.8,1 0.8,4.5 Q0.8,8 3.5,8 H5 M10,1 H11.5 Q14.2,1 14.2,4.5 Q14.2,8 11.5,8 H10 M4,4.5 H11" fill="none" stroke="#9a9a9a" stroke-width="1.4"/></svg>
<div class="t" style="left:1078px;top:899.00px;font-size:13px;color:#c8c8c8;font-weight:normal;font-style:italic;font-family:'Liberation Serif',serif">fx</div>
<div class="a" style="left:1087px;top:96px;width:1px;height:823px;background:#1e1e1e;"></div>
<div class="a" style="left:1088px;top:96px;width:170px;height:823px;background:#f0f0f0;"></div>
<div class="t" style="left:1110px;top:102.14px;font-size:12px;color:#000000;font-weight:normal;letter-spacing:0px">Fülloptionen...</div>
<div class="a" style="left:1091px;top:121px;width:167px;height:1px;background:#d0d0d0;"></div>
<div class="t" style="left:1110px;top:130.14px;font-size:12px;color:#000000;font-weight:normal;letter-spacing:0px">CSS kopieren</div>
<div class="t" style="left:1110px;top:147.14px;font-size:12px;color:#000000;font-weight:normal;letter-spacing:0px">SVG kopieren</div>
<div class="a" style="left:1091px;top:166px;width:167px;height:1px;background:#d0d0d0;"></div>
<div class="a" style="left:1091px;top:172px;width:167px;height:17px;background:#0078d7;"></div>
<div class="t" style="left:1110px;top:175.14px;font-size:12px;color:#ffffff;font-weight:normal;letter-spacing:0px">Ebene duplizieren...</div>
<div class="t" style="left:1110px;top:192.14px;font-size:12px;color:#000000;font-weight:normal;letter-spacing:0px">Ebene löschen</div>
<div class="t" style="left:1110px;top:209.14px;font-size:12px;color:#000000;font-weight:normal;letter-spacing:0px">Gruppe aus Ebenen...</div>
<div class="a" style="left:1091px;top:228px;width:167px;height:1px;background:#d0d0d0;"></div>
<div class="t" style="left:1110px;top:237.14px;font-size:12px;color:#000000;font-weight:normal;letter-spacing:0px">Schnell-Export als PNG</div>
<div class="t" style="left:1110px;top:254.14px;font-size:12px;color:#000000;font-weight:normal;letter-spacing:0px">Exportieren als...</div>
<div class="a" style="left:1091px;top:273px;width:167px;height:1px;background:#d0d0d0;"></div>
<div class="t" style="left:1110px;top:282.14px;font-size:12px;color:#000000;font-weight:normal;letter-spacing:0px">Zeichenfläche aus Ebenen...</div>
<div class="t" style="left:1110px;top:299.14px;font-size:12px;color:#6d6d6d;font-weight:normal;letter-spacing:0px">Rahmen aus Ebenen ...</div>
<div class="t" style="left:1110px;top:316.14px;font-size:12px;color:#000000;font-weight:normal;letter-spacing:0px">In Rahmen konvertieren</div>
<div class="a" style="left:1091px;top:335px;width:167px;height:1px;background:#d0d0d0;"></div>
<div class="t" style="left:1110px;top:344.14px;font-size:12px;color:#000000;font-weight:normal;letter-spacing:0px">Alle Objekte maskieren</div>
<div class="a" style="left:1091px;top:363px;width:167px;height:1px;background:#d0d0d0;"></div>
<div class="t" style="left:1110px;top:372.14px;font-size:12px;color:#000000;font-weight:normal;letter-spacing:0px">In Smartobjekt konvertieren</div>
<div class="a" style="left:1091px;top:391px;width:167px;height:1px;background:#d0d0d0;"></div>
<div class="t" style="left:1110px;top:400.14px;font-size:12px;color:#6d6d6d;font-weight:normal;letter-spacing:0px">Ebenen verbinden</div>
<div class="t" style="left:1110px;top:417.14px;font-size:12px;color:#6d6d6d;font-weight:normal;letter-spacing:0px">Verbundene Ebenen auswählen</div>
<div class="a" style="left:1091px;top:436px;width:167px;height:1px;background:#d0d0d0;"></div>
<div class="t" style="left:1110px;top:445.14px;font-size:12px;color:#000000;font-weight:normal;letter-spacing:0px">Text rastern</div>
<div class="t" style="left:1110px;top:462.14px;font-size:12px;color:#6d6d6d;font-weight:normal;letter-spacing:0px">Ebenenstil rastern</div>
<div class="t" style="left:1110px;top:479.14px;font-size:12px;color:#000000;font-weight:normal;letter-spacing:0px">Arbeitspfad erstellen</div>
<div class="t" style="left:1110px;top:496.14px;font-size:12px;color:#000000;font-weight:normal;letter-spacing:0px">In Form umwandeln</div>
<div class="a" style="left:1091px;top:515px;width:167px;height:1px;background:#d0d0d0;"></div>
<div class="t" style="left:1110px;top:524.14px;font-size:12px;color:#000000;font-weight:normal;letter-spacing:0px">Horizontal</div>
<div class="t" style="left:1110px;top:541.14px;font-size:12px;color:#000000;font-weight:normal;letter-spacing:0px">Vertikal</div>
<div class="a" style="left:1091px;top:560px;width:167px;height:1px;background:#d0d0d0;"></div>
<div class="t" style="left:1110px;top:569.14px;font-size:12px;color:#000000;font-weight:normal;letter-spacing:0px">Ohne</div>
<div class="t" style="left:1110px;top:586.14px;font-size:12px;color:#000000;font-weight:normal;letter-spacing:0px">Scharf</div>
<div class="t" style="left:1110px;top:603.14px;font-size:12px;color:#000000;font-weight:normal;letter-spacing:0px">Schärfer</div>
<div class="t" style="left:1110px;top:620.14px;font-size:12px;color:#000000;font-weight:normal;letter-spacing:0px">Stark</div>
<div class="t" style="left:1110px;top:637.14px;font-size:12px;color:#000000;font-weight:normal;letter-spacing:0px">Abrunden</div>
<div class="a" style="left:1091px;top:656px;width:167px;height:1px;background:#d0d0d0;"></div>
<div class="t" style="left:1110px;top:665.14px;font-size:12px;color:#000000;font-weight:normal;letter-spacing:0px">Windows-LCD</div>
<div class="t" style="left:1110px;top:682.14px;font-size:12px;color:#000000;font-weight:normal;letter-spacing:0px">Windows</div>
<div class="a" style="left:1091px;top:701px;width:167px;height:1px;background:#d0d0d0;"></div>
<div class="t" style="left:1110px;top:710.14px;font-size:12px;color:#000000;font-weight:normal;letter-spacing:0px">In Punkttext konvertieren</div>
<div class="a" style="left:1091px;top:729px;width:167px;height:1px;background:#d0d0d0;"></div>
<div class="t" style="left:1110px;top:738.14px;font-size:12px;color:#000000;font-weight:normal;letter-spacing:0px">Text verformen...</div>
<div class="a" style="left:1091px;top:757px;width:167px;height:1px;background:#d0d0d0;"></div>
<div class="t" style="left:1110px;top:766.14px;font-size:12px;color:#6d6d6d;font-weight:normal;letter-spacing:0px">Aus Isolierung entfernen</div>
<div class="a" style="left:1091px;top:785px;width:167px;height:1px;background:#d0d0d0;"></div>
<div class="t" style="left:1110px;top:794.14px;font-size:12px;color:#6d6d6d;font-weight:normal;letter-spacing:0px">Ebenenstil kopieren</div>
<div class="t" style="left:1110px;top:811.14px;font-size:12px;color:#6d6d6d;font-weight:normal;letter-spacing:0px">Ebenenstil einfügen</div>
<div class="t" style="left:1110px;top:828.14px;font-size:12px;color:#6d6d6d;font-weight:normal;letter-spacing:0px">Ebenenstil löschen</div>
<div class="a" style="left:1091px;top:847px;width:167px;height:1px;background:#d0d0d0;"></div>
<div class="t" style="left:1110px;top:856.14px;font-size:12px;color:#000000;font-weight:normal;letter-spacing:0px">Keine Farbe</div>
<div class="t" style="left:1110px;top:873.14px;font-size:12px;color:#000000;font-weight:normal;letter-spacing:0px">Rot</div>
<div class="t" style="left:1110px;top:890.14px;font-size:12px;color:#000000;font-weight:normal;letter-spacing:0px">Orange</div>
<div class="t" style="left:1110px;top:907.14px;font-size:12px;color:#000000;font-weight:normal;letter-spacing:0px">Gelb</div>
<div class="t" style="left:1110px;top:924.14px;font-size:12px;color:#000000;font-weight:normal;letter-spacing:0px">Grün</div>
<div class="a" style="left:1256px;top:0px;width:2px;height:96px;background:#6c7474;"></div>
<div class="a" style="left:1249px;top:31px;width:7px;height:40px;background:#2e2e2e;"></div>
</body></html>
